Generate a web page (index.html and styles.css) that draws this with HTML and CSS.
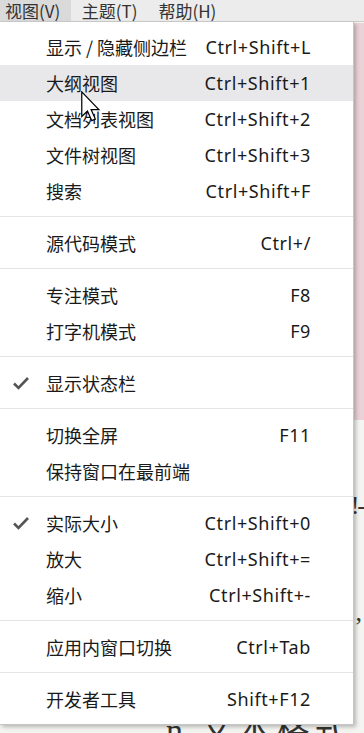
FILE: index.html
```html
<!DOCTYPE html>
<html lang="zh-CN">
<head>
    <meta charset="UTF-8">
    <meta name="viewport" content="width=device-width, initial-scale=1.0">
    <title>视图菜单</title>
    <link rel="stylesheet" href="styles.css">
</head>
<body>
    <div class="menubar">
        <span class="menubar-item active">视图(V)</span>
        <span class="menubar-item">主题(T)</span>
        <span class="menubar-item">帮助(H)</span>
    </div>

    <div class="doc">
        <div class="doc-highlight"></div>
        <p class="doc-line first">!-</p>
        <p class="doc-line second">,</p>
        <p class="doc-line last">n 文本格式</p>
    </div>

    <div class="menu">
        <div class="item"><span class="check"></span><span class="label">显示 / 隐藏侧边栏</span><span class="key">Ctrl+Shift+L</span></div>
        <div class="item hover"><span class="check"></span><span class="label">大纲视图</span><span class="key">Ctrl+Shift+1</span></div>
        <div class="item"><span class="check"></span><span class="label">文档列表视图</span><span class="key">Ctrl+Shift+2</span></div>
        <div class="item"><span class="check"></span><span class="label">文件树视图</span><span class="key">Ctrl+Shift+3</span></div>
        <div class="item"><span class="check"></span><span class="label">搜索</span><span class="key">Ctrl+Shift+F</span></div>
        <div class="sep"></div>
        <div class="item"><span class="check"></span><span class="label">源代码模式</span><span class="key">Ctrl+/</span></div>
        <div class="sep"></div>
        <div class="item"><span class="check"></span><span class="label">专注模式</span><span class="key">F8</span></div>
        <div class="item"><span class="check"></span><span class="label">打字机模式</span><span class="key">F9</span></div>
        <div class="sep"></div>
        <div class="item">
            <span class="check">
                <svg width="18" height="14" viewBox="0 0 18 14"><polyline points="2,7.5 6.5,12 16,2" fill="none" stroke="#555" stroke-width="2.6"/></svg>
            </span>
            <span class="label">显示状态栏</span><span class="key"></span>
        </div>
        <div class="sep"></div>
        <div class="item"><span class="check"></span><span class="label">切换全屏</span><span class="key">F11</span></div>
        <div class="item"><span class="check"></span><span class="label">保持窗口在最前端</span><span class="key"></span></div>
        <div class="sep"></div>
        <div class="item">
            <span class="check">
                <svg width="18" height="14" viewBox="0 0 18 14"><polyline points="2,7.5 6.5,12 16,2" fill="none" stroke="#555" stroke-width="2.6"/></svg>
            </span>
            <span class="label">实际大小</span><span class="key">Ctrl+Shift+0</span>
        </div>
        <div class="item"><span class="check"></span><span class="label">放大</span><span class="key">Ctrl+Shift+=</span></div>
        <div class="item"><span class="check"></span><span class="label">缩小</span><span class="key">Ctrl+Shift+-</span></div>
        <div class="sep"></div>
        <div class="item"><span class="check"></span><span class="label">应用内窗口切换</span><span class="key">Ctrl+Tab</span></div>
        <div class="sep"></div>
        <div class="item"><span class="check"></span><span class="label">开发者工具</span><span class="key">Shift+F12</span></div>
    </div>

    <svg class="cursor" width="20" height="31" viewBox="0 0 13 20">
        <path d="M0.5 0.5 L0.5 16.5 L4.2 13 L7 19.2 L9.3 18.2 L6.6 12 L11.6 12 Z" fill="#fff" stroke="#000" stroke-width="0.8" stroke-linejoin="miter"/>
    </svg>
</body>
</html>
```

FILE: styles.css
```css
/* page */
body {
    margin: 0;
    width: 364px;
    height: 733px;
    overflow: hidden;
    position: relative;
    background-color: #f4f4f1;
    font-family: "Noto Sans CJK SC", "Noto Sans", sans-serif;
    color: #1a1a1a;
}

/* top menu bar */
.menubar {
    display: flex;
    height: 21px;
    background-color: #ececec;
    border-bottom: 1px solid #cdcdcd;
    font-size: 17px;
    line-height: 22px;
    color: #333;
}

.menubar-item {
    height: 21px;
    padding: 0 10.5px;
}

.menubar-item:first-child {
    padding-left: 5px;
    padding-right: 11px;
}

.menubar-item.active {
    background-color: #dadada;
}

/* document behind the menu */
.doc {
    padding-top: 1px;
}

.doc-highlight {
    height: 397px;
    background-color: #ead3d7;
}

.doc-line {
    margin: 0;
    font-family: "Liberation Serif", "Noto Sans CJK SC", serif;
    font-size: 26px;
    line-height: 34px;
    white-space: nowrap;
    color: #333;
    text-align: right;
}

.doc-line.first {
    margin-top: 69px;
    letter-spacing: -2px;
}

.doc-line.second {
    margin-top: 73px;
    padding-right: 2px;
}

.doc-line.last {
    margin-top: 84px;
    padding-left: 166px;
    font-size: 34px;
    letter-spacing: 4px;
    text-align: left;
}

/* dropdown */
.menu {
    position: absolute;
    top: 22px;
    left: 0;
    width: 353px;
    padding: 7px 0;
    background-color: #fff;
    border-right: 1px solid #c6c6c6;
    border-bottom: 1px solid #c6c6c6;
    box-shadow: 2px 2px 4px rgba(0, 0, 0, 0.25);
}

.item {
    display: flex;
    align-items: center;
    height: 36px;
    padding: 0 42px 0 12px;
    font-size: 18px;
}

.item.hover {
    background-color: #e8e8ea;
}

.check {
    display: flex;
    align-items: center;
    width: 34px;
    height: 36px;
}

.label {
    flex: 1;
    white-space: nowrap;
}

.key {
    font-family: "Noto Sans", sans-serif;
    letter-spacing: 0.6px;
    white-space: nowrap;
}

.sep {
    height: 1px;
    margin: 7px 0 8px;
    background-color: #e4e4e4;
}

/* mouse pointer */
.cursor {
    position: absolute;
    left: 81px;
    top: 91px;
}
```
